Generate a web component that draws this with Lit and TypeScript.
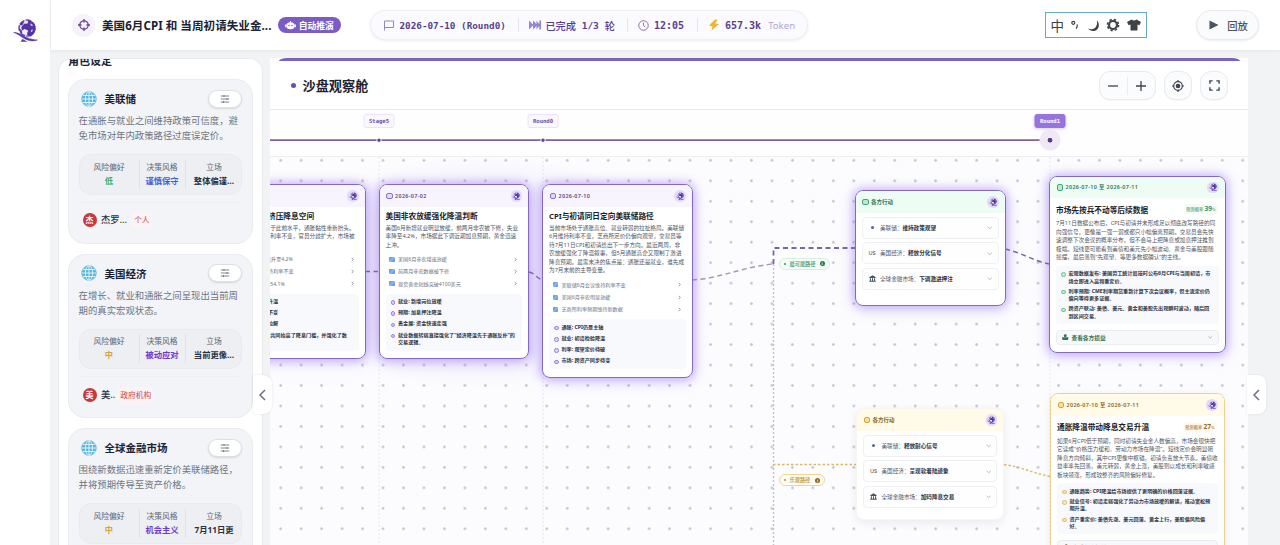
import { LitElement, html, svg, css } from "lit";
import { customElement, property } from "lit/decorators.js";
import { classMap } from "lit/directives/class-map.js";

const globeLogo = html`<svg viewBox="0 0 25 25" width="100%" height="100%">
  <circle cx="14" cy="10" r="8" fill="#efe9fc" stroke="#6747b4" stroke-width="1.500" stroke-dasharray="6 1.200"/>
  <path d="M15 2.500c4 0 7.600 3.300 7.600 7.700 0 4-2.400 7-5.400 8.200l-3.400-2.200 1.400-3.600-3.600-1.600-2.400 1.400-1-3.200 3-3.400 3.600-.4z" fill="#5433a2"/>
  <path d="M6 7.500 9.500 3.200l1.500 1-1.500 3zM5.800 10.500l2.800 1.300.6 3.200-1.400.2z" fill="#5b3aa8"/>
  <path d="M17 5.500l2 .6 1 2-2-.2zM18 12l2-.8-.8 2.600-1.400.4z" fill="#cdbff2"/>
  <path d="M.6 14.300c6 .6 9.600 3.600 13.600 5.400 3.200 1.400 6.400 2 10.200 2.300-4.400 1.600-8.600.9-12.200-.9C8 19 5.200 16 .6 14.300z" fill="#5736a6" stroke="#5736a6" stroke-width=".5"/>
  <path d="M7.500 23.800 9.500 21l5 2.800z" fill="#5b3aa8"/>
</svg>`;

const chevron = (d: string, size: number, color: string) => html`<svg
  viewBox="0 0 12 12" width=${size} height=${size} fill="none" stroke=${color} stroke-width="1.5"><path d=${d}/></svg>`;
const RIGHT = "M4 2l4 4-4 4";
const DOWN = "M1.500 4l4.500 4 4.500-4";
const LEFT = "M8 1 3 6l5 5";

interface Role { name: string; desc: string[]; risk: string; tone: string; style: string; styleTone: string; stance: string; person?: string; kind?: string; mark?: string; }

const roles: Role[] = [
  { name: "美联储", desc: ["在通胀与就业之间维持政策可信度，避", "免市场对年内政策路径过度误定价。"], risk: "低", tone: "green", style: "谨慎保守", styleTone: "blue", stance: "整体偏谨…", person: "杰罗…", kind: "个人", mark: "杰" },
  { name: "美国经济", desc: ["在增长、就业和通胀之间呈现出当前周", "期的真实宏观状态。"], risk: "中", tone: "amber", style: "被动应对", styleTone: "violet", stance: "当前更像…", person: "美..", kind: "政府机构", mark: "美" },
  { name: "全球金融市场", desc: ["围绕新数据迅速重新定价美联储路径，", "并将预期传导至资产价格。"], risk: "中", tone: "amber", style: "机会主义", styleTone: "violet", stance: "7月11日更" },
];

interface NodeData { x: number; y: number; w: number; h: number; date: string; title: string; desc: string[]; links?: string[]; points: string[][]; tone: string; prob?: string; }

const nodes: NodeData[] = [
  { x: -55, y: 27, w: 150.5, h: 175, tone: "purple", date: "2026-06-17", title: "能源通胀黏性挤压降息空间",
    desc: ["美国5月通胀率仍高于此前水平，通胀黏性重新抬头。", "美联储6月会议维持利率不变，官员分歧扩大，市场被", "迫重新定价。"],
    links: ["美国5月CPI同比升至4.2%", "美联储6月会维持利率不变", "核心通胀指数为54.1%"],
    points: [["通胀: 能源推动升温"], ["利率: 维持按兵不变"], ["分歧: 官员表态拉解"], ["通胀与利率决定共同抬高了降息门槛，并强化了数", "据依赖。"]] },
  { x: 108.500, y: 27, w: 150.5, h: 175, tone: "purple", date: "2026-07-02", title: "美国非农放缓强化降温判断",
    desc: ["美国6月新增就业明显放缓，前两月非农被下修，失业", "率降至4.2%，市场据此下调近期加息预期，黄金迅速", "上冲。"],
    links: ["美国6月非农增速放缓", "前两月非农数据被下修", "现货黄金短线突破4100美元"],
    points: [["就业: 新增岗位放缓"], ["预期: 加息押注降温"], ["贵金属: 资金快速走强"], ["就业数据转弱直接强化了“经济降温先于通胀反扑”的", "交易逻辑。"]] },
  { x: 272, y: 27, w: 150.5, h: 193.5, tone: "purple", date: "2026-07-10", title: "CPI与初请同日定向美联储路径",
    desc: ["当前市场处于通胀高位、就业转弱的拉扯格局。美联储", "6月维持利率不变，芝商所定价仍偏向观望，交易员等", "待7月11日CPI和初请给出下一步方向。最近两周，非", "农放缓强化了降温叙事，但5月通胀高企又限制了激进", "降息预期。最需未决的焦点是：通胀还是就业，谁先成", "为7月末前的主导变量。"],
    links: ["美联储6月会议维持利率不变", "美国6月非农明显放缓", "芝商所利率预期维持新数据"],
    points: [["通胀: CPI仍是主轴"], ["就业: 初请检验降温"], ["利率: 观望定价待破"], ["市场: 跨资产同步待变"]] },
  { x: 779, y: 18.500, w: 176.500, h: 177.500, tone: "green", date: "2026-07-10 至 2026-07-11", title: "市场先按兵不动等后续数据", prob: "39",
    desc: ["7月11日数据公布后，CPI与初请并未形成足以彻底改写路径的同", "向强信号，更像是一强一弱或都只小幅偏离预期。交易员会先快", "速调整下次会议的概率分布，但不会马上把降息或加息押注推到", "极端。短线更可能看到美债和美元先小幅波动、黄金与美股跟随", "摇摆，最后落到“先观望、等更多数据确认”的主线。"],
    points: [["宏观数据发布: 美国劳工统计局按时公布6月CPI与当周初请，市", "场立即进入高频重定价。"], ["利率预期: CME利率期货重新计算下次会议概率，但主流定价仍", "偏向等待更多证据。"], ["跨资产联动: 美债、美元、黄金和美股先出现瞬时波动，随后回", "到区间交易。"]] },
  { x: 780, y: 236, w: 174.500, h: 178, tone: "amber", date: "2026-07-10 至 2026-07-11", title: "通胀降温带动降息交易升温", prob: "27",
    desc: ["如果6月CPI低于预期，同时初请失业金人数偏高，市场会很快把", "它读成“价格压力缓和、劳动力市场在降温”。短线定价会明显朝", "降息方向倾斜，其中CPI更像中枢锚，初请负责放大节奏。美债收", "益率率先回落，美元转弱，黄金上涨，美股则以成长和利率敏感", "板块领涨，形成较整齐的风险偏好修复。"],
    points: [["通胀趋势: CPI降温给市场提供了更明确的价格回落证据。"], ["就业信号: 初请走弱强化了劳动力市场放缓的解读，推动宽松预", "期升温。"], ["资产重定价: 美债先涨、美元回落、黄金上行，美股偏风险偏", "好。"]] },
];

const actions = [
  { x: 584.500, y: 33, w: 151, h: 116, tone: "green", rows: ["维持政策观望", "释放分化信号", "下调激进押注"] },
  { x: 586, y: 251, w: 148, h: 112, tone: "amber", rows: ["释放耐心信号", "呈现软着陆迹象", "加码降息交易"] },
];
const actors = ["美联储", "美国经济", "全球金融市场"];

const bank = html`<svg viewBox="0 0 12 12" width="7" height="7" fill="#4b5563"><path d="M6 .5 11.500 4v1H.5V4zM1.500 5.500h1.800V10H1.500zM5.100 5.500h1.800V10H5.100zM8.700 5.500h1.800V10H8.700zM.5 10h11v1.500H.5z"/></svg>`;

@customElement("role-card")
class RoleCard extends LitElement {
  @property({ attribute: false }) role!: Role;
  static styles = css`
    :host { display: block; box-sizing: border-box; height: 164.500px; flex: none; background: #f3f4f7; border: 1px solid #e9ebef; border-radius: 17px; padding: 8.500px 10px 0 9.500px; }
    .head { display: flex; align-items: center; height: 20px; }
    .globe { width: 16px; height: 16px; margin: 0 7.500px 0 2.500px; flex: none; }
    .name { font-size: 10.500px; font-weight: 700; color: #1b2233; flex: 1; white-space: nowrap; }
    .tune { box-sizing: border-box; width: 33.500px; height: 18px; border-radius: 10px; background: #fff; border: 1px solid #dcdfe4; display: grid; place-items: center; box-shadow: 0 1px 2px #0000001f; }
    .desc { margin-top: 4.500px; font-size: 9.400px; line-height: 15.300px; color: #6b7482; white-space: nowrap; }
    .stats { margin-top: 10.500px; display: grid; grid-template-columns: 59px 46px 58px; height: 40.500px; box-sizing: border-box; border-radius: 12px; background: #eeeff3; border: 1px solid #e9eaee; align-items: center; }
    .stat { text-align: center; white-space: nowrap; height: 29px; box-sizing: border-box; font-size: 7.800px; line-height: 14px; color: #5b6472; }
    .stat + .stat { border-left: 1px solid #dfe1e6; }
    .stat b { display: block; font-size: 8.300px; color: #2a3140; line-height: 14.500px; }
    .stat .green { color: #3dae72; } .stat .blue { color: #3c62d8; } .stat .amber { color: #e0a136; } .stat .violet { color: #6a3bd0; }
    .foot { display: flex; align-items: center; margin-top: 7px; padding-top: 9.500px; border-top: 1px solid #eceef2; padding-left: 4px; white-space: nowrap; }
    .mark { width: 14px; height: 14px; border-radius: 50%; background: #c9363b; color: #fff; font-size: 8px; font-weight: 700; line-height: 14px; text-align: center; margin-right: 4.500px; }
    .person { font-size: 9.300px; line-height: 16px; font-weight: 500; color: #2a3140; margin-right: 5px; }
    .kind { font-size: 7.700px; line-height: 16px; color: #cb4545; background: #fbf3f4; padding: 0 2px; border-radius: 3px; }
    .kind.wide { margin-left: -2px; }
  `;
  render() {
    const r = this.role;
    return html`<div class="head">
        <svg class="globe" viewBox="0 0 16 16" fill="none" stroke="#e9f8ff" stroke-width=".9"><circle cx="8" cy="8" r="7.400" fill="#58b4dc" stroke="#8cc9e2"/><path d="M8 .8v14.400M1 8h14M2 4.500h12M2 11.500h12"/><ellipse cx="8" cy="8" rx="3.600" ry="7.200"/></svg>
        <span class="name">${r.name}</span>
        <span class="tune"><svg viewBox="0 0 10 10" width="10" height="10" stroke="#6f7682" stroke-width=".9" fill="none"><path d="M.8 2h8.400M.8 5h8.400M.8 8h8.400M4 1v2M7 4v2M3.500 7v2"/></svg></span>
      </div>
      <div class="desc">${r.desc.map((d) => html`<div>${d}</div>`)}</div>
      <div class="stats">
        <div class="stat">风险偏好<b class=${r.tone}>${r.risk}</b></div>
        <div class="stat">决策风格<b class=${r.styleTone}>${r.style}</b></div>
        <div class="stat">立场<b>${r.stance}</b></div>
      </div>
      ${r.person ? html`<div class="foot"><span class="mark">${r.mark}</span><span class="person">${r.person}</span><span class=${classMap({ kind: true, wide: r.kind!.length > 2 })}>${r.kind}</span></div>` : null}`;
  }
}

const nodeShell = css`
  :host { display: block; }
  .card { box-sizing: border-box; height: 100%; border-radius: 8px; background: #fff; overflow: hidden; white-space: nowrap; }
  .card.glow { border: 1.600px solid #8468c8; }
  .card.warm { border: 1.400px solid #ecd28c; }
  .card.plain { border: 1px solid #f7f5ee; }
  .head { display: flex; align-items: center; height: 21.800px; padding: 0 6px 0 6.500px; }
  .head.purple { background: #f7f4fe; } .head.green { background: #eefdf4; } .head.amber { background: #fffbe8; }
  .badge { box-sizing: border-box; width: 6.500px; height: 6.500px; border-radius: 2px; border: 1px solid; margin-right: 2.500px; background: #fff; }
  .badge.purple { border-color: #8b6fd0; background: #e2d9f8; } .badge.green { border: 1.500px solid #3ba772; background: #bfe8d1; } .badge.amber { border: 1.500px solid #dda52e; background: #f7dfa0; }
  .date { flex: 1; font-size: 5.400px; font-weight: 600; letter-spacing: .36px; }
  .date.tight { letter-spacing: 0; font-size: 5.500px; }
  .date.purple { color: #5a4788; } .date.green { color: #2f7558; } .date.amber { color: #8a6420; }
  .orb { box-sizing: border-box; width: 11.500px; height: 11.500px; padding: 1.600px; border-radius: 50%; background: #e2daf9; }
  .orb svg { display: block; }
`;

@customElement("event-node")
class EventNode extends LitElement {
  @property({ attribute: false }) node!: NodeData;
  static styles = [nodeShell, css`
    .body { padding: 3.500px 6px 0; }
    .top { display: flex; align-items: center; justify-content: space-between; height: 11px; }
    .top.tall { height: 15px; }
    .title { font-size: 7.680px; font-weight: 700; color: #181d2b; }
    .prob { font-size: 4.300px; color: #3f9469; background: #f2fbf6; border-radius: 3px; padding: 0 2px; line-height: 10px; margin-right: 1px; }
    .prob b { font-size: 6.600px; }
    .prob.amber { color: #a0661e; background: #fffaee; }
    .desc { font-size: 5.630px; line-height: 8.560px; color: #4d5563; margin-top: 2.300px; }
    .links { margin-top: 3.600px; padding: 0 4px 0 3.500px; }
    .link { display: flex; align-items: center; height: 12.300px; font-size: 5.120px; color: #687181; }
    .link span { flex: 1; }
    .doc { width: 5.500px; height: 5px; margin-right: 3.500px; border-radius: 1px; background: linear-gradient(135deg, #4f8ad8, #8db5ea 50%, #4f8ad8); }
    .points { margin-top: 4px; padding: 4.300px 5px; background: #f8f9fc; border-radius: 4px; display: grid; gap: 3.900px; font-size: 5.120px; line-height: 7.300px; font-weight: 700; color: #2b3242; }
    .points.tight { gap: 3px; }
    .point { display: flex; }
    .dot { box-sizing: border-box; width: 4.500px; height: 4.500px; border-radius: 50%; border: 1px solid #9c84d6; background: #dccff8; margin: 2.200px 3px 0 0; flex: none; }
    .dot.green { border-color: #6cc29b; background: #c4ecd7; } .dot.amber { border-color: #e5bf68; background: #fae6b4; }
    .more { box-sizing: border-box; display: flex; align-items: center; height: 15.500px; margin-top: 5.500px; padding: 0 5px; border: 1px solid #e9ecf1; border-radius: 4px; background: #f6f8fa; font-size: 5.700px; font-weight: 600; color: #2f7558; gap: 3px; }
    .more.amber { color: #8a6420; } .more span { flex: 1; }
  `];
  render() {
    const n = this.node, out = !!n.prob;
    return html`<div class=${classMap({ card: true, glow: n.tone !== "amber", warm: n.tone === "amber" })}>
      <div class="head ${n.tone}"><i class="badge ${n.tone}"></i><span class="date ${n.tone}">${n.date}</span><span class="orb">${globeLogo}</span></div>
      <div class="body">
        <div class=${classMap({ top: true, tall: out })}><span class="title">${n.title}</span>${out ? html`<span class="prob ${n.tone}">预测概率 <b>${n.prob}</b>%</span>` : null}</div>
        <div class="desc">${n.desc.map((d) => html`<div>${d}</div>`)}</div>
        ${n.links ? html`<div class="links">${n.links.map((l) => html`<div class="link"><i class="doc"></i><span>${l}</span>${chevron(RIGHT, 5, "#555c69")}</div>`)}</div>` : null}
        <div class=${classMap({ points: true, tight: out })}>${n.points.map((p) => html`<div class="point"><i class="dot ${n.tone}"></i><div>${p.map((t) => html`<div>${t}</div>`)}</div></div>`)}</div>
        ${out ? html`<div class="more ${n.tone}"><svg viewBox="0 0 12 12" width="6.500" height="6.500" fill="currentColor"><circle cx="6" cy="3.200" r="2.700"/><path d="M0 6h12l-1 5H1z"/></svg><span>查看各方损益</span>${chevron(DOWN, 4.500, "#7a8290")}</div>` : null}
      </div></div>`;
  }
}

@customElement("action-node")
class ActionNode extends LitElement {
  @property() tone = "green";
  @property({ attribute: false }) rows: string[] = [];
  static styles = [nodeShell, css`
    .head { height: 21.500px; }
    .rows { display: grid; gap: 3.500px; padding: 4px 6px; }
    .row { box-sizing: border-box; display: flex; align-items: center; height: 22.200px; border: 1px solid #eef0f4; border-radius: 4px; padding: 0 5px 0 6px; font-size: 5.600px; color: #4d5563; background: #fefeff; }
    .who { width: 7px; margin-right: 4.500px; display: grid; place-items: center; color: #333b4a; font-size: 5.600px; }
    .pip { width: 3px; height: 3px; border-radius: 50%; background: #53699c; }
    .row b { color: #2b3242; } .txt { flex: 1; }
  `];
  render() {
    const icons = [html`<i class="pip"></i>`, "US", bank];
    return html`<div class="card ${this.tone === "green" ? "glow" : "plain"}">
      <div class="head ${this.tone}"><i class="badge ${this.tone}"></i><span class="date tight ${this.tone}">各方行动</span><span class="orb">${globeLogo}</span></div>
      <div class="rows">${this.rows.map((r, i) => html`<div class="row"><span class="who">${icons[i]}</span><span class="txt">${actors[i]}：<b>${r}</b></span>${chevron(DOWN, 5.500, "#9aa1ad")}</div>`)}</div>
    </div>`;
  }
}

@customElement("app-root")
export class AppRoot extends LitElement {
  static styles = css`
    :host { display: flex; width: 1280px; height: 545px; overflow: hidden; background: #f1f3f5; font-family: "Noto Sans", "Noto Sans CJK SC", sans-serif; color: #1b2233; }
    .rail { box-sizing: border-box; width: 51px; background: #fff; border-right: 1px solid #f2f2f5; padding: 18px 0 0 13px; flex: none; }
    .logo { width: 25px; height: 25px; }
    .page { flex: 1; display: flex; flex-direction: column; min-width: 0; }
    header { box-sizing: border-box; height: 50px; flex: none; background: #fff; display: flex; align-items: center; padding: 0 21px 0 21px; white-space: nowrap; box-shadow: 0 1px 4px #0000000f; z-index: 1; }
    .target { width: 23px; height: 23px; border-radius: 50%; background: #f6f2fb; display: grid; place-items: center; margin-right: 7px; }
    h1 { margin: 0; width: 170px; font-size: 11.550px; font-weight: 700; letter-spacing: .05px; }
    .auto { box-sizing: border-box; height: 16px; width: 62.500px; border-radius: 9px; background: #7c5cc4; color: #fff; font-size: 8.800px; font-weight: 700; display: flex; align-items: center; justify-content: center; gap: 3px; margin-left: 6px; }
    .status { box-sizing: border-box; width: 438px; height: 30px; margin-left: 29px; border-radius: 15px; background: #fbfafe; border: 1px solid #f0eef7; box-shadow: 0 1px 3px #00000014; display: flex; align-items: center; padding-left: 12px; font: 700 9.300px "DejaVu Sans Mono", "Noto Sans CJK SC", monospace; color: #563f92; }
    .status svg { flex: none; margin-right: 5px; }
    .seg { display: flex; align-items: center; box-sizing: border-box; height: 14px; }
    .seg + .seg { border-left: 1px solid #e6e2f0; padding-left: 10px; }
    .s1 { width: 135px; } .s2 { width: 109.500px; font-size: 10.200px; font-weight: 500; letter-spacing: -.1px; } .s3 { width: 70px; font-size: 10px; } .s4 { font-size: 10px; }
    .s2 b { margin: 0 6px; font-size: 9.500px; }
    .tok { font: 400 9.600px "Noto Sans"; color: #b1a6d2; margin-left: 7px; }
    .ime { box-sizing: border-box; width: 102px; height: 26px; margin-left: 237px; border: 1px solid #6ba6c4; display: flex; align-items: center; padding: 0 5px 0 5px; justify-content: space-between; font-size: 13.500px; color: #3d4148; }
    .replay { box-sizing: border-box; width: 63px; height: 30px; margin-left: auto; border-radius: 15px; background: #fafbfd; border: 1px solid #e8eaee; box-shadow: 0 1px 2px #00000014; display: flex; align-items: center; justify-content: center; gap: 8px; font-size: 10.300px; font-weight: 500; color: #4b5260; padding-left: 2px; }
    main { flex: 1; display: flex; padding: 8px 32px 0 7px; gap: 7.500px; min-height: 0; }
    aside { box-sizing: border-box; width: 204.500px; border-radius: 14px 14px 0 0; background: #fff; border: 1px solid #e8ebee; border-bottom: 0; overflow: hidden; padding: 0 9px; flex: none; }
    .stack { display: flex; flex-direction: column; gap: 10px; margin-top: -7px; }
    .stack h2 { margin: 0; font-size: 11px; line-height: 17px; font-weight: 700; }
    .board { flex: 1; min-width: 0; background: #fff; display: flex; flex-direction: column; }
    .strip { height: 2.500px; margin: 0 8px 0 9px; background: #7b62bd; border-radius: 8px 8px 0 0 / 3px 3px 0 0; flex: none; }
    .bar { box-sizing: border-box; height: 49px; flex: none; display: flex; align-items: center; padding: 2px 20px 0 20.500px; border-bottom: 1px solid #e8e9ef; box-shadow: 0 1px 1px #00000008; }
    .bullet { width: 5px; height: 5px; border-radius: 50%; background: #6d4bb8; margin-right: 7px; }
    .bar h2 { margin: 0; flex: 1; font-size: 13.200px; font-weight: 700; }
    .tool { box-sizing: border-box; height: 29px; width: 28px; border: 1px solid #e7eaf0; border-radius: 11px; background: #fafcfe; display: grid; place-items: center; margin-left: 8px; box-shadow: 0 1px 1px #00000008; }
    .zoom { width: 57.500px; grid-template-columns: 1fr 1fr; background: linear-gradient(#e9ecf1, #e9ecf1) 50% 50% / 1px 18px no-repeat #fafcfe; }
    .axis { position: relative; height: 47.500px; box-sizing: border-box; flex: none; background: #fefdff; border-bottom: 1px solid #eeedf4; }
    .tag { position: absolute; top: 4.500px; box-sizing: border-box; width: 31px; height: 14px; transform: translateX(-50%); border: 1px solid #ebe4f8; border-radius: 2.500px; background: #faf7ff; font: 700 5.600px/12px "DejaVu Sans Mono", monospace; text-align: center; color: #6b52a8; }
    .tag.on { background: #9673dd; border-color: #9673dd; color: #fff; box-shadow: 0 1px 3px #9673dd55; }
    .axis svg { display: block; }
    .canvas { position: relative; flex: 1; overflow: hidden; background: #fcfcfe radial-gradient(circle, #c5c6d6 1px, transparent 1.600px) .460px -6.900px / 20.480px 20.480px; }
    .haze { position: absolute; left: 0; top: 0; width: 430px; height: 230px; background: radial-gradient(ellipse, #a98cf01c 50%, transparent 72%); }
    .wires { position: absolute; inset: 0; }
    .node { position: absolute; border-radius: 8px; }
    .lit { box-shadow: 0 0 9px 2px #8b62f05c, 0 3px 16px #8b62f03d; }
    .soft { box-shadow: 0 3px 10px #00000012; }
    .path { position: absolute; box-sizing: border-box; height: 12px; border-radius: 6px; border: 1px solid #d5f0e1; background: #f5fdf8; color: #3b9470; font-size: 5.200px; font-weight: 500; display: flex; align-items: center; padding: 0 4px; white-space: nowrap; }
    .path i { width: 2px; height: 2px; border-radius: 50%; background: currentColor; margin-right: 3.500px; }
    .path em { margin-left: auto; width: 5px; height: 5px; border-radius: 50%; background: #257a55; color: #fff; font: 700 4px/5px "Noto Sans"; text-align: center; }
    .path.amber { border-color: #f0d68e; background: #fffdf3; color: #c0902c; } .path.amber em { background: #8f641a; }
    .handle { position: absolute; top: 375px; width: 19px; height: 39px; background: #fff; display: grid; place-items: center; box-shadow: 0 0 3px #00000018; border-radius: 3px 9px 9px 3px; z-index: 2; }
    .left { left: 253px; } .right { left: 1247px; border-radius: 0 8px 8px 0; }
  `;

  private wires() {
    return html`<svg class="wires" width="978" height="388" fill="none">
      ${svg`<g stroke="#e1ddf0" stroke-width=".8" stroke-dasharray="2 2"><path d="M109 0V388M273 0V388M780 0V388"/></g>
      <path d="M503.500 107V388" stroke="#c5c1ca" stroke-width="1.500" stroke-dasharray="2 2"/>
      <g stroke="#7a64ae" stroke-width="1.500" stroke-dasharray="5 3.500"><path d="M95 114.500H108M259 115c6 1 8 7 14 8M735 92c15 3 29 12 44 15"/><path d="M422 123c30-2 50-13 81-16" stroke="#a497b9"/><path d="M503.500 107V91H585" stroke-width="1.800"/></g>
      <g stroke="#dcb765" stroke-width="1.400" stroke-dasharray="2.500 2"><path d="M503 307.500H588M734 307.500c16 2 30 9 46 12"/></g>`}
    </svg>`;
  }

  render() {
    return html`
      <div class="rail"><div class="logo">${globeLogo}</div></div>
      <div class="page">
        <header>
          <span class="target"><svg viewBox="0 0 12 12" width="12" height="12" fill="none" stroke="#69458f" stroke-width="1.300"><circle cx="6" cy="6" r="4.200"/><path d="M6 0v3.500M6 8.500V12M0 6h3.500M8.500 6H12"/></svg></span>
          <h1>美国6月CPI 和 当周初请失业金...</h1>
          <span class="auto"><svg viewBox="0 0 12 10" width="11" height="9"><path d="M5.500 0h1v2h-1zM0 4h1.500v3H0zM10.500 4H12v3h-1.500z" fill="#fff"/><ellipse cx="6" cy="5.400" rx="4.600" ry="3.900" fill="#fff"/><circle cx="4.300" cy="5" r=".9" fill="#7c5cc4"/><circle cx="7.700" cy="5" r=".9" fill="#7c5cc4"/></svg>自动推演</span>
          <div class="status">
            <span class="seg s1"><svg viewBox="0 0 12 12" width="12" height="12" fill="none" stroke="#9488b8" stroke-width="1"><path d="M1.500 11.500V2H10.500v6.500h-9"/></svg>2026-07-10 (Round0)</span>
            <span class="seg s2"><svg viewBox="0 0 12 10" width="12" height="10" fill="#9583da"><path d="M0 .5l4.500 4.500L0 9.500zM4 .5 8.500 5 4 9.500zM7.500 .5l3.500 4.500-3.500 4.500zM10.300 .5H12v9h-1.700z"/></svg>已完成<b>1/3</b>轮</span>
            <span class="seg s3"><svg viewBox="0 0 12 12" width="11" height="11" fill="none" stroke="#7a69ab" stroke-width="1"><circle cx="6" cy="6" r="5.200"/><path d="M6 2.800V6l2 1.600"/></svg>12:05</span>
            <span class="seg s4"><svg viewBox="0 0 12 12" width="12" height="12" fill="#efb52d"><path d="M7 .5 1 6.600l3.500.8L3.500 11.500 11 5 7.300 4.400 9.500.5z"/></svg>657.3k<span class="tok">Token</span></span>
          </div>
          <div class="ime"><span>中</span>
            <svg viewBox="0 0 10 12" width="10" height="12" fill="none" stroke="#3d4148" stroke-width="1.200"><circle cx="3.300" cy="3.800" r="1.500"/><path d="M7.200 5.500v1.500q0 1.500-1.200 2.500"/></svg>
            <svg viewBox="0 0 12 12" width="13" height="13" fill="#3d4148"><path d="M9 1.200C12 4 11.600 9.500 7.500 10.800 4.800 11.500 2.200 10.500 1 8.800c3 1.200 6 .8 7.400-1.800 1-1.800 1.200-3.800.6-5.800z"/></svg>
            <svg viewBox="0 0 14 14" width="14" height="14" fill="none" stroke="#3d4148"><circle cx="7" cy="7" r="4" stroke-width="2.200"/><circle cx="7" cy="7" r="5.600" stroke-width="1.500" stroke-dasharray="2.400 2"/></svg>
            <svg viewBox="0 0 14 12" width="14" height="12" fill="#3d4148"><path d="M4.500.5q2.500 2 5 0L14 3l-1.600 3.200-1.900-.8v6h-7v-6l-1.900.8L0 3z"/></svg>
          </div>
          <div class="replay"><svg viewBox="0 0 10 10" width="10" height="10" fill="#4b5260"><path d="M.5.5 9.500 5 .5 9.500z"/></svg>回放</div>
        </header>
        <main>
          <aside><div class="stack"><h2>角色设定</h2>${roles.map((r) => html`<role-card .role=${r}></role-card>`)}</div></aside>
          <section class="board">
            <div class="strip"></div>
            <div class="bar"><i class="bullet"></i><h2>沙盘观察舱</h2>
              <div class="tool zoom"><svg viewBox="0 0 12 12" width="12" height="12" stroke="#3d4350" stroke-width="1.300"><path d="M1 6h10"/></svg><svg viewBox="0 0 12 12" width="12" height="12" stroke="#3d4350" stroke-width="1.300"><path d="M1 6h10M6 1v10"/></svg></div>
              <div class="tool"><svg viewBox="0 0 12 12" width="12" height="12" fill="none" stroke="#3d4350" stroke-width="1.200"><circle cx="6" cy="6" r="4.300"/><circle cx="6" cy="6" r="1.700" fill="#3d4350"/><path d="M6 0v2M6 10v2M0 6h2M10 6h2"/></svg></div>
              <div class="tool"><svg viewBox="0 0 12 12" width="11" height="11" fill="none" stroke="#3d4350" stroke-width="1.500"><path d="M1 4V1h3M8 1h3v3M11 8v3H8M4 11H1V8"/></svg></div>
            </div>
            <div class="axis">
              <svg width="978" height="46"><path d="M0 30.200H776" stroke="#80609f" stroke-width="1.800"/>
                <g fill="#5e4389" stroke="#fff"><circle cx="109" cy="30.200" r="2.200"/><circle cx="273" cy="30.200" r="2.200"/></g>
                <circle cx="780" cy="30.200" r="10.500" fill="#efe8f7"/><circle cx="780" cy="30.200" r="3" fill="#5e3a86" stroke="#fff"/></svg>
              <span class="tag" style="left:109px">Stage5</span><span class="tag" style="left:273px">Round0</span><span class="tag on" style="left:780px">Round1</span>
            </div>
            <div class="canvas">
              <div class="haze"></div>
              ${this.wires()}
              ${nodes.map((n) => html`<event-node class="node ${n.tone === "amber" ? "soft" : "lit"}" .node=${n} style="left:${n.x}px;top:${n.y}px;width:${n.w}px;height:${n.h}px"></event-node>`)}
              ${actions.map((a) => html`<action-node class="node ${a.tone === "amber" ? "soft" : "lit"}" .tone=${a.tone} .rows=${a.rows} style="left:${a.x}px;top:${a.y}px;width:${a.w}px;height:${a.h}px"></action-node>`)}
              <div class="path" style="left:509px;top:100.500px;width:50.500px"><i></i>最可能路径<em>i</em></div>
              <div class="path amber" style="left:509px;top:317px;width:46px"><i></i>乐观路径<em>i</em></div>
            </div>
          </section>
        </main>
      </div>
      <div class="handle left">${chevron(LEFT, 12, "#6b7280")}</div>
      <div class="handle right">${chevron(LEFT, 12, "#6b7280")}</div>`;
  }
}
